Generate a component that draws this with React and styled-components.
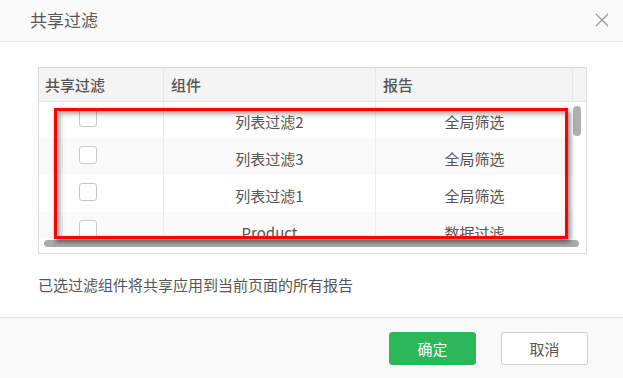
import React from "react";
import styled, { createGlobalStyle } from "styled-components";

const GlobalStyle = createGlobalStyle`
	html, body {
		margin: 0;
		padding: 0;
		background: #fff;
	}
	body {
		font-family: "Noto Sans CJK SC", "Noto Sans", sans-serif;
		color: #555;
	}
`;

const Dialog = styled.div`
	width: 623px;
	height: 378px;
	display: flex;
	flex-direction: column;
	background: #fff;
	overflow: hidden;
`;

const Header = styled.div`
	height: 41px;
	flex-shrink: 0;
	display: flex;
	align-items: center;
	justify-content: space-between;
	padding: 0 14px 0 30px;
	background: #fafafa;
	border-bottom: 1px solid #e8e8e8;
`;

const Title = styled.div`
	font-size: 17px;
	line-height: 24px;
	color: #555;
	margin-top: -2px;
`;

const Close = styled.button`
	width: 14px;
	height: 14px;
	padding: 0;
	border: 0;
	background: none;
	display: flex;
	cursor: pointer;
	margin-top: -2px;
`;

const Content = styled.div`
	flex: 1;
	padding: 25px 36px 0 38px;
`;

const Table = styled.div`
	position: relative;
	border: 1px solid #dcdcdc;
	background: #fff;
`;

const HeadRow = styled.div`
	display: grid;
	grid-template-columns: 125px 212px 197px 1fr;
	height: 33px;
	background: #f4f4f4;
	border-bottom: 1px solid #e6e6e6;
`;

const HeadCell = styled.div`
	display: flex;
	align-items: center;
	padding-left: ${(p) => p.$pad || 6}px;
	font-size: 15px;
	font-weight: 500;
	color: #555;
	border-right: ${(p) => (p.$last ? "0" : "1px solid #e6e6e6")};
`;

const BodyWrap = styled.div`
	display: flex;
	height: 136px;
`;

const Rows = styled.div`
	width: 534px;
	height: 136px;
	overflow: hidden;
`;

const RowsInner = styled.div`
	margin-top: -1px;
`;

const Row = styled.div`
	display: grid;
	grid-template-columns: 125px 212px 197px;
	height: 37px;
	background: ${(p) => (p.$odd ? "#fafafa" : "#fff")};
`;

const Cell = styled.div`
	display: flex;
	justify-content: ${(p) => (p.$left ? "flex-start" : "center")};
	align-items: flex-start;
	padding-top: ${(p) => (p.$left ? 8 : 11)}px;
	padding-left: ${(p) => (p.$left ? 40 : 0)}px;
	font-size: 15px;
	line-height: 20px;
	color: #555;
	border-right: ${(p) => (p.$last ? "0" : "1px solid #ececec")};
`;

const Checkbox = styled.span`
	width: 16px;
	height: 16px;
	border: 1px solid #c9c9c9;
	border-radius: 3px;
	background: #fff;
`;

const VScroll = styled.div`
	flex: 1;
	padding-top: 4px;
`;

const VThumb = styled.div`
	width: 8px;
	height: 30px;
	border-radius: 4px;
	background: #b0b0b0;
`;

const HScroll = styled.div`
	height: 15px;
	padding: 2px 7px 0 5px;
	box-sizing: border-box;
`;

const HThumb = styled.div`
	height: 7px;
	border-radius: 4px;
	background: #ababab;
`;

const Highlight = styled.div`
	position: absolute;
	left: 15px;
	top: 40px;
	width: 514px;
	height: 131px;
	box-sizing: border-box;
	border: 3px solid #ff0000;
	box-shadow: 2px 3px 5px rgba(0, 0, 0, 0.5), inset 3px 3px 5px rgba(0, 0, 0, 0.35);
	pointer-events: none;
`;

const Note = styled.div`
	margin-top: 21px;
	font-size: 15px;
	line-height: 20px;
	color: #555;
`;

const Footer = styled.div`
	height: 60px;
	flex-shrink: 0;
	display: flex;
	align-items: center;
	justify-content: flex-end;
	gap: 25px;
	padding: 0 35px 0 0;
	background: #f9f9f9;
	border-top: 1px solid #e8e8e8;
`;

const Button = styled.button`
	width: 87px;
	height: 33px;
	border-radius: 3px;
	font-family: inherit;
	font-size: 15px;
	cursor: pointer;
	border: 1px solid ${(p) => (p.$primary ? "#2bb75a" : "#cfcfcf")};
	background: ${(p) => (p.$primary ? "#2bb75a" : "#fff")};
	color: ${(p) => (p.$primary ? "#fff" : "#555")};
`;

const rows = [
	{ name: "列表过滤2", report: "全局筛选" },
	{ name: "列表过滤3", report: "全局筛选" },
	{ name: "列表过滤1", report: "全局筛选" },
	{ name: "Product", report: "数据过滤" },
];

export default function App() {
	return (
		<>
			<GlobalStyle />
			<Dialog>
				<Header>
					<Title>共享过滤</Title>
					<Close aria-label="关闭">
						<svg width="14" height="14" viewBox="0 0 14 14">
							<path d="M1 1L13 13M13 1L1 13" stroke="#9a9a9a" strokeWidth="1.2" fill="none" />
						</svg>
					</Close>
				</Header>
				<Content>
					<Table>
						<HeadRow>
							<HeadCell $pad={6}>共享过滤</HeadCell>
							<HeadCell $pad={7}>组件</HeadCell>
							<HeadCell $pad={7}>报告</HeadCell>
							<HeadCell $last />
						</HeadRow>
						<BodyWrap>
							<Rows>
								<RowsInner>
									{rows.map((r, i) => (
										<Row key={r.name} $odd={i % 2 === 1}>
											<Cell $left>
												<Checkbox />
											</Cell>
											<Cell>{r.name}</Cell>
											<Cell $last>{r.report}</Cell>
										</Row>
									))}
								</RowsInner>
							</Rows>
							<VScroll>
								<VThumb />
							</VScroll>
						</BodyWrap>
						<HScroll>
							<HThumb />
						</HScroll>
						<Highlight />
					</Table>
					<Note>已选过滤组件将共享应用到当前页面的所有报告</Note>
				</Content>
				<Footer>
					<Button $primary>确定</Button>
					<Button>取消</Button>
				</Footer>
			</Dialog>
		</>
	);
}
